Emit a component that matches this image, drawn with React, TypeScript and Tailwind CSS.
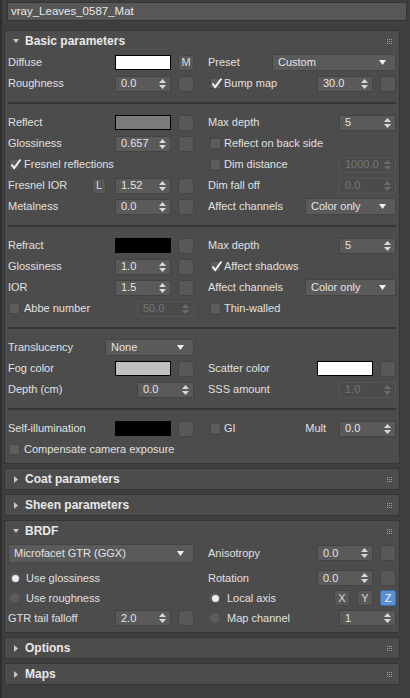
import clsx from 'clsx';
import type { ReactNode } from 'react';

function SpinArrows({ disabled }: { disabled?: boolean }) {
  return (
    <svg
      width="7"
      height="10"
      viewBox="0 0 7 10"
      className={clsx(
        'absolute right-[4px] top-1/2 -translate-y-1/2',
        disabled ? 'fill-[#6c6c6c]' : 'fill-[#d8d8d8]'
      )}
    >
      <path d="M3.5 0L7 4H0Z" />
      <path d="M0 6H7L3.5 10Z" />
    </svg>
  );
}

function Spinner({
  value,
  className = 'w-[56px]',
  disabled,
}: {
  value: string;
  className?: string;
  disabled?: boolean;
}) {
  return (
    <div
      className={clsx(
        'relative flex h-[16px] shrink-0 items-center rounded-[1px] border pl-[5px]',
        disabled
          ? 'border-[#565656] bg-[#4b4b4b] text-[#767676]'
          : 'border-[#434343] bg-[#5a5a5a] text-[#e4e4e4]',
        className
      )}
    >
      <span>{value}</span>
      <SpinArrows disabled={disabled} />
    </div>
  );
}

function MapBtn({ label }: { label?: string }) {
  return (
    <div className="flex h-[16px] w-[16px] shrink-0 items-center justify-center rounded-[3px] border border-[#454545] bg-[#585858] text-[#dcdcdc]">
      {label}
    </div>
  );
}

function Swatch({ color }: { color: string }) {
  return (
    <div className={clsx('h-[15px] w-[56px] shrink-0 border border-black', color)} />
  );
}

function Check({ checked }: { checked?: boolean }) {
  return (
    <div className="relative h-[11px] w-[11px] shrink-0 border border-[#474747] bg-[#5d5d5d]">
      {checked && (
        <svg
          width="12"
          height="12"
          viewBox="0 0 12 12"
          className="absolute left-0 top-[-2px] stroke-[#f2f2f2]"
          fill="none"
        >
          <path d="M1.5 6.5L4.2 10L10.5 1.5" strokeWidth="2" />
        </svg>
      )}
    </div>
  );
}

function Radio({ on }: { on?: boolean }) {
  return on ? (
    <div className="flex h-[10px] w-[10px] shrink-0 items-center justify-center rounded-full bg-[#5e5e5e]">
      <div className="h-[7px] w-[7px] rounded-full bg-[#eeeeee]" />
    </div>
  ) : (
    <div className="h-[10px] w-[10px] shrink-0 rounded-full bg-[#5b5b5b]" />
  );
}

function Dropdown({ value, className }: { value: string; className: string }) {
  return (
    <div
      className={clsx(
        'flex h-[17px] shrink-0 items-center justify-between rounded-[1px] border border-[#444444] bg-[#5a5a5a] pl-[5px] pr-[9px] text-[#e4e4e4]',
        className
      )}
    >
      <span>{value}</span>
      <svg width="7" height="5" viewBox="0 0 7 5" className="fill-[#f0f0f0]">
        <path d="M0 0H7L3.5 5Z" />
      </svg>
    </div>
  );
}

function Grip() {
  const dots = [0, 2, 4];
  return (
    <svg width="5" height="5" viewBox="0 0 5 5" className="fill-[#a0a0a0]">
      {dots.map((y) =>
        dots.map((x) => <rect key={`${x}-${y}`} x={x} y={y} width="1" height="1" />)
      )}
    </svg>
  );
}

function Row({ children, className }: { children?: ReactNode; className?: string }) {
  return <div className={clsx('flex h-[21px] items-center', className)}>{children}</div>;
}

function Divider() {
  return <div className="col-span-2 my-[8px] h-[2px] bg-[#363636]" />;
}

function Rollout({
  title,
  open,
  children,
}: {
  title: string;
  open?: boolean;
  children?: ReactNode;
}) {
  return (
    <div className="mt-[4px] rounded-[2px] border border-[#363636] bg-[#4c4c4c]">
      <div className="flex h-[20px] items-center pl-[7px] pr-[7px]">
        <div className="flex w-[7px] justify-center">
          {open ? (
            <svg width="6" height="4" viewBox="0 0 6 4" className="fill-[#c8c8c8]">
              <path d="M0 0H6L3 4Z" />
            </svg>
          ) : (
            <svg width="4" height="7" viewBox="0 0 4 7" className="fill-[#c8c8c8]">
              <path d="M0 0L4 3.5L0 7Z" />
            </svg>
          )}
        </div>
        <span className="ml-[6px] text-[12px] font-bold text-[#e8e8e8]">{title}</span>
        <div className="ml-auto">
          <Grip />
        </div>
      </div>
      {children}
    </div>
  );
}

function Grid({ children }: { children: ReactNode }) {
  return <div className="grid grid-cols-[186px_188px] gap-x-[14px]">{children}</div>;
}

function LBtn() {
  return (
    <div className="flex h-[16px] w-[14px] shrink-0 items-center justify-center rounded-[3px] border border-[#454545] bg-[#585858] text-[#dcdcdc]">
      L
    </div>
  );
}

function AxisBtn({ label, active }: { label: string; active?: boolean }) {
  return (
    <div
      className={clsx(
        'flex h-[16px] w-[16px] items-center justify-center rounded-[2px] border',
        active
          ? 'border-[#3d6ea8] bg-[#5a8fd2] text-[#eef4ff]'
          : 'border-[#454545] bg-[#585858] text-[#d8d8d8]'
      )}
    >
      {label}
    </div>
  );
}

export default function App() {
  return (
    <div className="h-[698px] w-[410px] overflow-hidden border-l-[2px] border-[#2f2f2f] bg-[#3f3f3f] font-['Liberation_Sans',Arial,sans-serif] text-[11px] leading-none text-[#e0e0e0]">
      <div className="pt-[2px] pl-[5px] pr-[3px]">
        <div className="flex h-[19px] items-center border border-[#333333] bg-[#575757] pl-[3px] text-[11.5px] text-[#e8e8e8]">
          vray_Leaves_0587_Mat
        </div>
      </div>

      <div className="pt-[5px] pl-[2px] pr-[10px]">
        <Rollout title="Basic parameters" open>
          <div className="pl-[3px] pr-[3px] pt-[1px] pb-[3px]">
            <Grid>
              <Row>
                <span>Diffuse</span>
                <div className="ml-auto flex items-center gap-[7px]">
                  <Swatch color="bg-white" />
                  <MapBtn label="M" />
                </div>
              </Row>
              <Row>
                <span>Preset</span>
                <Dropdown value="Custom" className="ml-auto w-[124px]" />
              </Row>
              <Row>
                <span>Roughness</span>
                <div className="ml-auto flex items-center gap-[7px]">
                  <Spinner value="0.0" />
                  <MapBtn />
                </div>
              </Row>
              <Row>
                <div className="ml-[2px] flex items-center gap-[3px]">
                  <Check checked />
                  <span>Bump map</span>
                </div>
                <div className="ml-auto flex items-center gap-[7px]">
                  <Spinner value="30.0" />
                  <MapBtn />
                </div>
              </Row>

              <Divider />

              <Row>
                <span>Reflect</span>
                <div className="ml-auto flex items-center gap-[7px]">
                  <Swatch color="bg-[#7c7c7c]" />
                  <MapBtn />
                </div>
              </Row>
              <Row>
                <span>Max depth</span>
                <Spinner value="5" className="ml-auto w-[57px]" />
              </Row>
              <Row>
                <span>Glossiness</span>
                <div className="ml-auto flex items-center gap-[7px]">
                  <Spinner value="0.657" />
                  <MapBtn />
                </div>
              </Row>
              <Row>
                <div className="ml-[2px] flex items-center gap-[3px]">
                  <Check />
                  <span>Reflect on back side</span>
                </div>
              </Row>
              <Row>
                <div className="ml-[1px] flex items-center gap-[4px]">
                  <Check checked />
                  <span>Fresnel reflections</span>
                </div>
              </Row>
              <Row>
                <div className="ml-[2px] flex items-center gap-[3px]">
                  <Check />
                  <span>Dim distance</span>
                </div>
                <Spinner value="1000.0" className="ml-auto w-[57px]" disabled />
              </Row>
              <Row>
                <span>Fresnel IOR</span>
                <div className="ml-auto flex items-center">
                  <LBtn />
                  <div className="ml-[9px] flex items-center gap-[7px]">
                    <Spinner value="1.52" />
                    <MapBtn />
                  </div>
                </div>
              </Row>
              <Row>
                <span>Dim fall off</span>
                <Spinner value="0.0" className="ml-auto w-[57px]" disabled />
              </Row>
              <Row>
                <span>Metalness</span>
                <div className="ml-auto flex items-center gap-[7px]">
                  <Spinner value="0.0" />
                  <MapBtn />
                </div>
              </Row>
              <Row>
                <span>Affect channels</span>
                <Dropdown value="Color only" className="ml-auto w-[91px]" />
              </Row>

              <Divider />

              <Row>
                <span>Refract</span>
                <div className="ml-auto flex items-center gap-[7px]">
                  <Swatch color="bg-black" />
                  <MapBtn />
                </div>
              </Row>
              <Row>
                <span>Max depth</span>
                <Spinner value="5" className="ml-auto w-[57px]" />
              </Row>
              <Row>
                <span>Glossiness</span>
                <div className="ml-auto flex items-center gap-[7px]">
                  <Spinner value="1.0" />
                  <MapBtn />
                </div>
              </Row>
              <Row>
                <div className="ml-[2px] flex items-center gap-[3px]">
                  <Check checked />
                  <span>Affect shadows</span>
                </div>
              </Row>
              <Row>
                <span>IOR</span>
                <div className="ml-auto flex items-center gap-[7px]">
                  <Spinner value="1.5" />
                  <MapBtn />
                </div>
              </Row>
              <Row>
                <span>Affect channels</span>
                <Dropdown value="Color only" className="ml-auto w-[91px]" />
              </Row>
              <Row>
                <div className="ml-[1px] flex items-center gap-[4px]">
                  <Check />
                  <span>Abbe number</span>
                </div>
                <Spinner value="50.0" className="ml-auto w-[57px]" disabled />
              </Row>
              <Row>
                <div className="ml-[2px] flex items-center gap-[3px]">
                  <Check />
                  <span>Thin-walled</span>
                </div>
              </Row>

              <Divider />

              <Row>
                <span>Translucency</span>
                <Dropdown value="None" className="ml-auto w-[89px]" />
              </Row>
              <Row />
              <Row>
                <span>Fog color</span>
                <div className="ml-auto flex items-center gap-[7px]">
                  <Swatch color="bg-[#c0c0c0]" />
                  <MapBtn />
                </div>
              </Row>
              <Row>
                <span>Scatter color</span>
                <div className="ml-auto flex items-center gap-[7px]">
                  <Swatch color="bg-white" />
                  <MapBtn />
                </div>
              </Row>
              <Row>
                <span>Depth (cm)</span>
                <Spinner value="0.0" className="ml-auto w-[57px]" />
              </Row>
              <Row>
                <span>SSS amount</span>
                <Spinner value="1.0" className="ml-auto w-[57px]" disabled />
              </Row>

              <Divider />

              <Row>
                <span>Self-illumination</span>
                <div className="ml-auto flex items-center gap-[7px]">
                  <Swatch color="bg-black" />
                  <MapBtn />
                </div>
              </Row>
              <Row>
                <div className="ml-[2px] flex items-center gap-[3px]">
                  <Check />
                  <span>GI</span>
                </div>
                <span className="ml-auto">Mult</span>
                <Spinner value="0.0" className="ml-[13px] w-[57px]" />
              </Row>
              <Row>
                <div className="ml-[1px] flex items-center gap-[4px]">
                  <Check />
                  <span>Compensate camera exposure</span>
                </div>
              </Row>
              <Row />
            </Grid>
          </div>
        </Rollout>

        <Rollout title="Coat parameters" />
        <Rollout title="Sheen parameters" />

        <Rollout title="BRDF" open>
          <div className="pl-[3px] pr-[3px] pt-[1px] pb-[4px]">
            <Grid>
              <div className="mb-[4px] flex h-[22px] items-center">
                <Dropdown value="Microfacet GTR (GGX)" className="h-[19px] w-full" />
              </div>
              <div className="mb-[4px] flex h-[22px] items-center">
                <span>Anisotropy</span>
                <div className="ml-auto flex items-center gap-[7px]">
                  <Spinner value="0.0" />
                  <MapBtn />
                </div>
              </div>
              <Row className="!h-[20px]">
                <div className="ml-[2px] flex items-center gap-[6px]">
                  <Radio on />
                  <span>Use glossiness</span>
                </div>
              </Row>
              <Row className="!h-[20px]">
                <span>Rotation</span>
                <div className="ml-auto flex items-center gap-[7px]">
                  <Spinner value="0.0" />
                  <MapBtn />
                </div>
              </Row>
              <Row className="!h-[20px]">
                <div className="ml-[2px] flex items-center gap-[6px]">
                  <Radio />
                  <span>Use roughness</span>
                </div>
              </Row>
              <Row className="!h-[20px]">
                <div className="ml-[2px] flex items-center gap-[7px]">
                  <Radio on />
                  <span>Local axis</span>
                </div>
                <div className="ml-auto flex items-center gap-[7px]">
                  <AxisBtn label="X" />
                  <AxisBtn label="Y" />
                  <AxisBtn label="Z" active />
                </div>
              </Row>
              <Row className="!h-[20px]">
                <span>GTR tail falloff</span>
                <div className="ml-auto flex items-center gap-[7px]">
                  <Spinner value="2.0" />
                  <MapBtn />
                </div>
              </Row>
              <Row className="!h-[20px]">
                <div className="ml-[2px] flex items-center gap-[7px]">
                  <Radio />
                  <span>Map channel</span>
                </div>
                <Spinner value="1" className="ml-auto w-[57px]" />
              </Row>
            </Grid>
          </div>
        </Rollout>

        <Rollout title="Options" />
        <Rollout title="Maps" />
      </div>
    </div>
  );
}
